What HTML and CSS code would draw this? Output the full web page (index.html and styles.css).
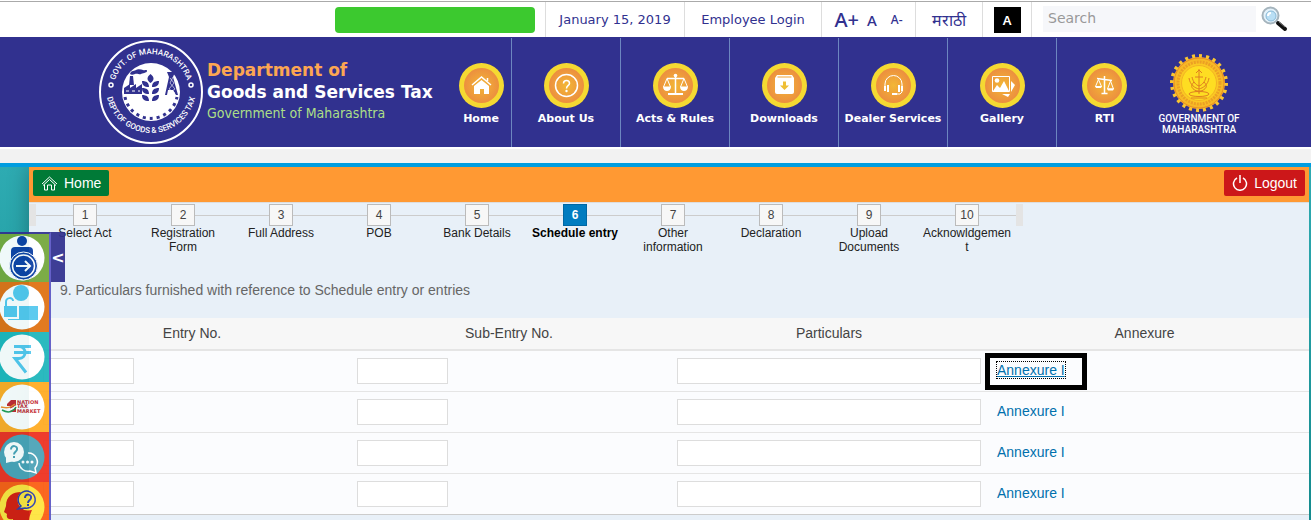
FILE: index.html
```html
<!DOCTYPE html>
<html lang="en">
<head>
    <meta charset="UTF-8">
    <meta name="viewport" content="width=device-width, initial-scale=1.0">
    <title>Department of Goods and Services Tax</title>
    <link rel="stylesheet" href="styles.css">
</head>
<body>
    <!-- shared gradients and icon parts -->
    <svg class="defs" width="0" height="0" aria-hidden="true">
        <defs>
            <radialGradient id="coin">
                <stop offset="0" stop-color="#f3b735"/>
                <stop offset="1" stop-color="#ec8f3f"/>
            </radialGradient>
            <radialGradient id="gold">
                <stop offset="0" stop-color="#ffe628"/>
                <stop offset="0.6" stop-color="#fdd522"/>
                <stop offset="1" stop-color="#f6b326"/>
            </radialGradient>
            <g id="disc">
                <circle cx="22.5" cy="22.5" r="22.5" fill="#f5d932"/>
                <circle cx="22.5" cy="22.5" r="17.5" fill="url(#coin)"/>
            </g>
        </defs>
    </svg>

    <div class="topbar">
        <div class="user-box"></div>
        <div class="top-cell date">January 15, 2019</div>
        <div class="top-cell login"><a href="#">Employee Login</a></div>
        <div class="top-cell font-size">
            <button class="size-large">A+</button>
            <button class="size-normal">A</button>
            <button class="size-small">A-</button>
        </div>
        <div class="top-cell lang"><a href="#" lang="mr">मराठी</a></div>
        <div class="top-cell contrast"><button class="contrast-button">A</button></div>
        <form class="top-cell search">
            <input type="search" placeholder="Search" aria-label="Search">
            <button type="button" class="search-button" aria-label="Search">
                <svg width="28" height="26" viewBox="0 0 28 26">
                    <path d="M16 15l3 3" stroke="#aaa" stroke-width="2"/>
                    <path d="M18 17l7 6" stroke="#111" stroke-width="4" stroke-linecap="round"/>
                    <path d="M19 16l6 5" stroke="#777" stroke-width="1"/>
                    <circle cx="10.5" cy="9.5" r="8" fill="#e3f2fb" stroke="#a5b4bd" stroke-width="2"/>
                    <circle cx="11" cy="10" r="5" fill="#b9dff5" stroke="#8ab9d6"/>
                    <path d="M8 10a3 3 0 0 1 3-3" stroke="#fff" stroke-width="2" fill="none"/>
                </svg>
            </button>
        </form>
    </div>

    <header class="header">
        <div class="brand">
            <svg class="seal" width="104" height="104" viewBox="0 0 104 104">
                <defs>
                    <path id="arc-top" d="M14 52A38 38 0 0 1 90 52"/>
                    <path id="arc-bottom" d="M7 48A45 45 0 0 0 97 48"/>
                </defs>
                <circle cx="52" cy="52" r="51" fill="none" stroke="#fff" stroke-width="2"/>
                <text class="seal-text" text-anchor="middle"><textPath href="#arc-top" startOffset="50%">GOVT. OF MAHARASHTRA</textPath></text>
                <text class="seal-text" text-anchor="middle"><textPath href="#arc-bottom" startOffset="50%">DEPT.OF GOODS &amp; SERVICES TAX</textPath></text>
                <circle cx="12" cy="45" r="2" fill="none" stroke="#fff" stroke-width="1.5"/>
                <circle cx="92" cy="45" r="2" fill="none" stroke="#fff" stroke-width="1.5"/>
                <circle cx="52" cy="52" r="29" fill="#fff"/>
                <path d="M26 57A26.500 26.500 0 0 0 78 57" fill="none" stroke="#31318f" stroke-width="3" stroke-dasharray="3 4"/>
                <g fill="#31318f">
                    <path d="M25 54v-6l6-4v4l6-4v4l6-4v10z"/>
                    <path d="M30 45l1-9h3l1 9z"/>
                    <path d="M31 34c1-4 5-3 6-4s5-1 7 0 4-1 4 1-5 2-6 3-4-1-6 0-4 1-5 0z"/>
                    <path d="M66 55l4-18-2-5h8l-2 5 5 18h-2l-3-5h-5l-1 5z"/>
                    <path d="M51.500 34c4 3 4 6 0 9-4-3-4-6 0-9z"/>
                    <path d="M50 47c-5 0-7-2-7-6 5 0 7 2 7 6zM53 47c5 0 7-2 7-6-5 0-7 2-7 6zM50 54c-5 0-7-2-7-6 5 0 7 2 7 6zM53 54c5 0 7-2 7-6-5 0-7 2-7 6zM50 61c-5 0-7-2-7-6 5 0 7 2 7 6zM53 61c5 0 7-2 7-6-5 0-7 2-7 6z"/>
                </g>
                <path d="M27 51h3M33 51h3M39 51h2" stroke="#fff" fill="none"/>
                <path d="M71 38l4 5-5 6 6 4M74 37l-3 6 5 6-6 4" stroke="#fff" stroke-width="0.6" fill="none"/>
            </svg>
            <div class="brand-text">
                <div class="brand-top">Department of</div>
                <div class="brand-name">Goods and Services Tax</div>
                <div class="brand-gov">Government of Maharashtra</div>
            </div>
        </div>

        <nav class="nav">
            <a href="#" class="nav-item nav-home">
                <svg width="45" height="45" viewBox="0 0 45 45">
                    <use href="#disc"/>
                    <path d="M13 22l9.500-8 9.500 8M28.500 18v-3" stroke="#fff" stroke-width="1.500" fill="none"/>
                    <path d="M15 23l7.500-6 7.500 6v8h-5v-5h-4v5h-6z" fill="#fff"/>
                </svg>
                <span>Home</span>
            </a>
            <a href="#" class="nav-item">
                <svg width="45" height="45" viewBox="0 0 45 45">
                    <use href="#disc"/>
                    <circle cx="22.5" cy="22.5" r="11" fill="none" stroke="#fff" stroke-width="1.5"/>
                    <path d="M19.500 20.500c0-4 6-4 6 0 0 2-3 2-3 5" fill="none" stroke="#fff" stroke-width="1.500"/>
                    <circle cx="22.5" cy="28" r="1.2" fill="#fff"/>
                </svg>
                <span>About Us</span>
            </a>
            <a href="#" class="nav-item">
                <svg width="45" height="45" viewBox="0 0 45 45">
                    <use href="#disc"/>
                    <path d="M22.500 12v18M14 15.500h17" stroke="#fff" stroke-width="1.500"/>
                    <circle cx="22.5" cy="12.5" r="1.8" fill="#fff"/>
                    <path d="M15 31h15" stroke="#fff" stroke-width="2"/>
                    <path d="M10.500 24L14 15.500 17.500 24M27.500 24L31 15.500 34.500 24" fill="none" stroke="#fff"/>
                    <path d="M10 23.500h8c0 6-8 6-8 0zM27 23.500h8c0 6-8 6-8 0z" fill="#fff"/>
                </svg>
                <span>Acts &amp; Rules</span>
            </a>
            <a href="#" class="nav-item">
                <svg width="45" height="45" viewBox="0 0 45 45">
                    <use href="#disc"/>
                    <path d="M13 15l2-3h15l2 3v14a2 2 0 0 1-2 2H15a2 2 0 0 1-2-2z" fill="#fff"/>
                    <path d="M15.500 14h14" stroke="#f0a63a"/>
                    <path d="M21 18.500h3v4h3l-4.500 4.500-4.500-4.500h3z" fill="#efbf35"/>
                </svg>
                <span>Downloads</span>
            </a>
            <a href="#" class="nav-item">
                <svg width="45" height="45" viewBox="0 0 45 45">
                    <use href="#disc"/>
                    <path d="M14 24v-3a8.500 8.500 0 0 1 17 0v8l-2 2h-4" fill="none" stroke="#fff"/>
                    <path d="M13 23h2v5h-2zM16 22h2v7h-2zM27 22h2v7h-2zM30 23h2v5h-2zM21 30h5v2h-5z" fill="#fff"/>
                </svg>
                <span>Dealer Services</span>
            </a>
            <a href="#" class="nav-item">
                <svg width="45" height="45" viewBox="0 0 45 45">
                    <use href="#disc"/>
                    <path d="M31 18l4 4-4 7zM22 31h8l-2 3z" fill="#fff"/>
                    <path d="M12.500 13.500h17v15h-17z" fill="none" stroke="#fff"/>
                    <circle cx="17" cy="17.5" r="2.3" fill="#fff"/>
                    <path d="M13 28l4-6 3 3 4-7 5 10z" fill="#fff"/>
                </svg>
                <span>Gallery</span>
            </a>
            <a href="#" class="nav-item nav-last">
                <svg width="45" height="45" viewBox="0 0 45 45">
                    <use href="#disc"/>
                    <path d="M22.500 13v17M15 15.500l15 2M19.500 30.500h6" stroke="#fff" stroke-width="1.500"/>
                    <path d="M13.500 23.500l3-7 3 7zM25.500 26l3-8 3 8z" fill="none" stroke="#fff"/>
                    <path d="M13 23h7l-1 2h-5zM25 25.500h7l-1 2h-5z" fill="#fff"/>
                </svg>
                <span>RTI</span>
            </a>
        </nav>

        <div class="emblem">
            <svg width="60" height="60" viewBox="0 0 60 60">
                <circle cx="30" cy="30" r="26" fill="#f6a72a"/>
                <circle cx="30" cy="30" r="26.5" fill="none" stroke="#f9c531" stroke-width="5" stroke-dasharray="3 4" pathLength="168"/>
                <circle cx="30" cy="30" r="25" fill="url(#gold)" stroke="#e88f25"/>
                <circle cx="30" cy="30" r="21" fill="none" stroke="#eca024" stroke-width="3" stroke-dasharray="2 1"/>
                <circle cx="30" cy="30" r="17.5" fill="#fedd22" stroke="#f3b124"/>
                <g fill="none" stroke="#de7f20">
                    <path d="M30 16v25M27 20l3-3 3 3M26 24h8M20 25c1 7 6 10 10 11 4-1 9-4 10-11M23 24c1 5 4 8 7 9 3-1 6-4 7-9M25 29c-4 4-3 7 5 10 8-3 9-6 5-10"/>
                    <ellipse cx="30" cy="41" rx="10" ry="2.5"/>
                    <path d="M22 45h16M26 38h8"/>
                </g>
            </svg>
            <div>GOVERNMENT OF<br>MAHARASHTRA</div>
        </div>
    </header>

    <div class="strip"></div>

    <main class="main">
        <div class="panel">
            <div class="action-bar">
                <a href="#" class="button home-button">
                    <svg width="17" height="15" viewBox="0 0 17 15" fill="none" stroke="#fff">
                        <path d="M1 8l7.500-7L16 8M2 9.500l6.500-6 6.500 6M3.500 8.500v5.500h3v-5h4v5h3V8.500"/>
                    </svg>
                    Home
                </a>
                <button class="button logout-button">
                    <svg width="16" height="16" viewBox="0 0 16 16" fill="none" stroke="#fff" stroke-width="1.5">
                        <path d="M5 3a6.500 6.500 0 1 0 6 0M8 0v8"/>
                    </svg>
                    Logout
                </button>
            </div>

            <ol class="steps">
                <li><span class="number">1</span>Select Act</li>
                <li><span class="number">2</span>Registration Form</li>
                <li><span class="number">3</span>Full Address</li>
                <li><span class="number">4</span>POB</li>
                <li><span class="number">5</span>Bank Details</li>
                <li class="active"><span class="number">6</span>Schedule entry</li>
                <li><span class="number">7</span>Other information</li>
                <li><span class="number">8</span>Declaration</li>
                <li><span class="number">9</span>Upload Documents</li>
                <li><span class="number">10</span>Acknowldgement</li>
            </ol>

            <h1 class="title">9. Particulars furnished with reference to Schedule entry or entries</h1>

            <table class="entries">
                <thead>
                    <tr>
                        <th>Entry No.</th>
                        <th>Sub-Entry No.</th>
                        <th>Particulars</th>
                        <th>Annexure</th>
                    </tr>
                </thead>
                <tbody>
                    <tr>
                        <td><input type="text" class="short" aria-label="Entry No. 1"></td>
                        <td><input type="text" class="short" aria-label="Sub-Entry No. 1"></td>
                        <td><input type="text" aria-label="Particulars 1"></td>
                        <td><a href="#" class="marked">Annexure I</a></td>
                    </tr>
                    <tr>
                        <td><input type="text" class="short" aria-label="Entry No. 2"></td>
                        <td><input type="text" class="short" aria-label="Sub-Entry No. 2"></td>
                        <td><input type="text" aria-label="Particulars 2"></td>
                        <td><a href="#">Annexure I</a></td>
                    </tr>
                    <tr>
                        <td><input type="text" class="short" aria-label="Entry No. 3"></td>
                        <td><input type="text" class="short" aria-label="Sub-Entry No. 3"></td>
                        <td><input type="text" aria-label="Particulars 3"></td>
                        <td><a href="#">Annexure I</a></td>
                    </tr>
                    <tr>
                        <td><input type="text" class="short" aria-label="Entry No. 4"></td>
                        <td><input type="text" class="short" aria-label="Sub-Entry No. 4"></td>
                        <td><input type="text" aria-label="Particulars 4"></td>
                        <td><a href="#">Annexure I</a></td>
                    </tr>
                </tbody>
            </table>
        </div>
    </main>

    <!-- quick links over the left edge -->
    <aside class="dock">
        <div class="dock-links">
            <a href="#" class="dock-item green" aria-label="Login">
                <svg width="46" height="46" viewBox="0 0 46 46">
                    <circle cx="23" cy="23" r="22.5" fill="#fff"/>
                    <g fill="#0a3ea3">
                        <circle cx="23" cy="6" r="5"/>
                        <path d="M12 30V16q0-4 4-4h14q4 0 4 4v14z"/>
                    </g>
                    <circle cx="24.500" cy="31" r="14" fill="#0a3ea3" stroke="#fff"/>
                    <circle cx="24.500" cy="31" r="11" fill="none" stroke="#fff" stroke-width="1.5"/>
                    <path d="M17 31h13M26 26l5 5-5 5" fill="none" stroke="#fff" stroke-width="2"/>
                </svg>
            </a>
            <a href="#" class="dock-item orange" aria-label="Unlock profile">
                <svg width="46" height="46" viewBox="0 0 46 46">
                    <circle cx="23" cy="23" r="22.5" fill="#fff"/>
                    <g fill="#52c8ee">
                        <circle cx="22" cy="9" r="8"/>
                        <path d="M20 22h19v14H9v-1h11z"/>
                        <path d="M5 22h13v11H5z"/>
                    </g>
                    <path d="M7 22v-4c0-5 7-5 7-1" fill="none" stroke="#52c8ee" stroke-width="2"/>
                    <path d="M19 21v13H5" fill="none" stroke="#fff"/>
                </svg>
            </a>
            <a href="#" class="dock-item teal" aria-label="Payments">
                <svg width="46" height="46" viewBox="0 0 46 46">
                    <circle cx="23" cy="23" r="22.5" fill="#fff"/>
                    <path d="M15 12.500h17M15 18.500h17M15 12.500h5c8 0 8 12 0 12h-4l11 14" fill="none" stroke="#52c8ee" stroke-width="3"/>
                </svg>
            </a>
            <a href="#" class="dock-item amber" aria-label="Nation Tax Market">
                <svg width="46" height="46" viewBox="0 0 46 46">
                    <circle cx="23" cy="23" r="22.5" fill="#fff"/>
                    <path d="M8 20l4-4h5v12h-6v-6H8z" fill="#c2262e"/>
                    <path d="M2 23c7 2 10 0 14-3" fill="none" stroke="#f28c28" stroke-width="1.5"/>
                    <path d="M3 25c7 3 11 0 14-3" fill="none" stroke="#fff" stroke-width="2"/>
                    <path d="M3 26c7 4 12 1 14-3" fill="none" stroke="#1f9a50" stroke-width="1.5"/>
                    <text class="market-text" x="18" y="20">NATION</text>
                    <text class="market-text" x="18" y="24">TAX</text>
                    <text class="market-text" x="18" y="29">MARKET</text>
                </svg>
            </a>
            <a href="#" class="dock-item red" aria-label="Chat">
                <svg width="46" height="46" viewBox="0 0 46 46">
                    <circle cx="23" cy="23" r="22.5" fill="#4aa2b6"/>
                    <circle cx="15" cy="18" r="10" fill="#fff"/>
                    <path d="M7 23v6l8-2z" fill="#fff"/>
                    <path d="M12 15.500c0-5 7-4 6 0 0 2-3 2-3 5M15 22v2" fill="none" stroke="#4aa2b6" stroke-width="2"/>
                    <path d="M29 19a9 9 0 0 1 7 15l1 5-6-2a9 9 0 0 1-11-8" fill="none" stroke="#fff" stroke-width="1.500"/>
                    <g fill="#fff">
                        <circle cx="24" cy="28" r="1.5"/>
                        <circle cx="28.5" cy="28" r="1.5"/>
                        <circle cx="33" cy="28" r="1.5"/>
                    </g>
                </svg>
            </a>
            <a href="#" class="dock-item flame" aria-label="Help">
                <svg width="46" height="46" viewBox="0 0 46 46">
                    <circle cx="23" cy="23" r="22.5" fill="#ffe53b"/>
                    <path d="M7 22c0-10 7-14 15-14 9 0 13 6 12 14-1 6-4 8-4 18H14v-5c-5 1-7-1-6-5l-3-2z" fill="#d8190b"/>
                    <circle cx="29" cy="16" r="10.5" fill="#ffe53b"/>
                    <path d="M22 22l-3 3 7-1a8.500 8.500 0 1 0-4-2z" fill="#ffe53b" stroke="#2a3bb0" stroke-width="1.500"/>
                    <path d="M26 14c0-5 7-4 6 0 0 2-3 2-3 5M29 20v2" fill="none" stroke="#2a3bb0" stroke-width="2"/>
                </svg>
            </a>
        </div>
        <button class="dock-toggle">&lt;</button>
    </aside>
</body>
</html>
```
FILE: styles.css
```css
* {
    margin: 0;
    padding: 0;
    box-sizing: border-box;
}

body {
    display: flex;
    flex-direction: column;
    min-height: 100vh;
    background: #fff;
    color: #444;
    font-family: "Liberation Sans", Arial, sans-serif;
    font-size: 14px;
}

a {
    text-decoration: none;
}

button {
    border: none;
    background: none;
    cursor: pointer;
}

svg {
    display: block;
    flex: none;
}

.defs {
    position: absolute;
}

/* top bar */
.topbar {
    display: flex;
    justify-content: flex-end;
    height: 36px;
    margin-top: 1px;
    border-top: 1px solid #aaa;
    font-family: Verdana, "DejaVu Sans", sans-serif;
    font-size: 13px;
    color: #31318f;
}

.user-box {
    width: 200px;
    height: 26px;
    margin: 5px 10px 0 0;
    border-radius: 4px;
    background: #3cc92f;
}

.top-cell {
    display: flex;
    align-items: center;
    justify-content: center;
    border-left: 1px solid #ddd;
}

.top-cell a {
    color: #31318f;
}

.date {
    width: 139px;
}

.login {
    width: 137px;
}

.font-size {
    width: 94px;
    gap: 8px;
}

.font-size button {
    font-family: "Noto Sans", sans-serif;
    font-weight: 500;
    color: #31318f;
}

.font-size .size-large {
    font-size: 20px;
}

.font-size .size-normal {
    font-size: 15px;
}

.font-size .size-small {
    margin-left: 6px;
    font-size: 12px;
}

.lang {
    width: 67px;
    font-size: 16px;
    font-weight: 500;
}

.contrast {
    width: 49px;
}

.contrast-button {
    width: 27px;
    height: 26px;
    background: #000;
    color: #fff;
    font-family: "Noto Sans", sans-serif;
    font-size: 13px;
    font-weight: 600;
}

.search {
    width: 280px;
    justify-content: flex-start;
    padding: 0 0 2px 11px;
}

.search input {
    width: 213px;
    height: 26px;
    border: none;
    background: #f6f7fa;
    padding: 0 0 2px 5px;
    font-family: Verdana, "DejaVu Sans", sans-serif;
    font-size: 14px;
}

.search input::placeholder {
    color: #999;
}

.search-button {
    margin-left: 4px;
}

/* header */
.header {
    display: flex;
    height: 110px;
    padding-right: 65px;
    background: #31318f;
    font-family: Verdana, "DejaVu Sans", sans-serif;
}

.brand {
    display: flex;
    flex: 1;
    align-items: flex-start;
    gap: 4px;
    padding: 3px 0 0 99px;
    white-space: nowrap;
}

.seal-text {
    font-family: Roboto, sans-serif;
    font-size: 8px;
    font-weight: 500;
    fill: #fff;
}

.brand-text {
    padding-top: 19px;
    font-size: 17px;
    font-weight: bold;
    line-height: 22px;
    color: #fff;
}

.brand-top {
    color: #fca652;
}

.brand-gov {
    font-family: Tahoma, "DejaVu Sans Condensed", sans-serif;
    font-size: 14px;
    font-weight: normal;
    line-height: 20px;
    color: #acdf87;
}

.nav {
    display: flex;
    padding-top: 1px;
}

.nav-item {
    display: flex;
    flex-direction: column;
    align-items: center;
    gap: 4px;
    width: 109px;
    padding-top: 25px;
    border-right: 1px solid #6d86c0;
    color: #fff;
    font-size: 11px;
    font-weight: bold;
    line-height: 14px;
    white-space: nowrap;
}

.nav-home {
    width: 61px;
}

.nav-last {
    width: 95px;
    border-right: none;
}

.emblem {
    display: flex;
    flex-direction: column;
    align-items: center;
    width: 94px;
    padding-top: 16px;
    color: #fff;
    font-family: Roboto, sans-serif;
    font-size: 10px;
    font-weight: 500;
    line-height: 11px;
    text-align: center;
    white-space: nowrap;
}

.strip {
    height: 20px;
    border-top: 2px solid #fff;
    border-bottom: 4px solid #009de0;
    background: #f2f2f2;
}

/* main panel */
.main {
    display: flex;
    flex: 1;
    padding: 0 2px 0 29px;
    background: linear-gradient(#2eabb2, #148b8e);
}

.panel {
    flex: 1;
    min-width: 0;
    background: #e8f0f8;
    box-shadow: 0 0 20px rgba(0, 0, 0, 0.3);
    clip-path: inset(0 0 0 -29px);
}

.action-bar {
    display: flex;
    justify-content: space-between;
    align-items: flex-start;
    height: 36px;
    padding: 3px 4px 0;
    border-bottom: 1px solid #ddd;
    background: #ff9933;
}

.button {
    display: flex;
    align-items: center;
    gap: 6px;
    height: 26px;
    padding: 0 8px;
    border-radius: 2px;
    color: #fff;
    font-family: inherit;
    font-size: 14px;
}

.home-button {
    background: #007a37;
}

.logout-button {
    background: #cc1719;
}

.steps {
    display: flex;
    width: 994px;
    margin-top: 1px;
    border: solid #e4e4e4;
    border-width: 0 7px;
    border-image: linear-gradient(#e4e4e4 22px, transparent 22px) 1;
    background: linear-gradient(#ccc, #ccc) 0 11px / 100% 1px no-repeat;
    list-style: none;
}

.steps li {
    flex: 1;
    min-width: 0;
    padding: 0 4px;
    color: #222;
    font-size: 12px;
    line-height: 14px;
    text-align: center;
    overflow-wrap: break-word;
}

.number {
    display: block;
    width: 24px;
    height: 22px;
    margin: 0 auto;
    border: 1px solid #bbb;
    background: #f7f7f7;
    color: #444;
    line-height: 20px;
}

.steps .active {
    color: #000;
    font-weight: bold;
}

.active .number {
    border-color: #0067a3;
    background: #007cc0;
    color: #fff;
}

.title {
    padding: 28px 31px 20px;
    color: #666;
    font-size: 14px;
    font-weight: normal;
    line-height: 16px;
}

/* entries table */
.entries {
    width: 100%;
    table-layout: fixed;
    border-collapse: separate;
    border-spacing: 0;
    border-bottom: 1px solid #ccc;
    background: #fbfcfe;
}

.entries th {
    height: 33px;
    padding: 0 8px 2px;
    border-bottom: 2px solid #e5e5e5;
    background: #f7f7f7;
    font-weight: normal;
}

.entries td {
    height: 41px;
    padding: 0 8px;
    border-bottom: 1px solid #e5e5e5;
}

.entries tr:last-child td {
    height: 40px;
    border-bottom: none;
}

.entries tr > :first-child {
    padding-left: 14px;
}

.entries tr > :last-child {
    padding-right: 17px;
    padding-bottom: 2px;
}

.entries input {
    display: block;
    width: 100%;
    height: 26px;
    border: 1px solid #ddd;
    background: #fff;
}

.entries .short {
    width: 91px;
}

.entries a {
    color: #0070ad;
}

.entries .marked {
    position: relative;
    outline: 1px dotted #000;
    text-decoration: underline;
}

.marked::before {
    content: "";
    position: absolute;
    inset: -9px -22px -12px -12px;
    border: 5px solid #000;
}

/* dock */
.dock {
    position: fixed;
    top: 232px;
    bottom: 0;
    left: 0;
    display: flex;
    align-items: flex-start;
    overflow: hidden;
    opacity: 0.93;
}

.dock-links {
    width: 51px;
    border-top: 2px solid #31318f;
    border-right: 2px solid #5b57c4;
}

.dock-item {
    display: flex;
    align-items: center;
    height: 50px;
}

.dock-item svg {
    margin-left: -1px;
}

.green {
    height: 48px;
    background: #74a73a;
}

.orange {
    background: #e07010;
}

.teal {
    background: #1bb5bb;
}

.amber {
    background: #ffab20;
}

.red {
    background: #ee2f1e;
}

.flame {
    background: #fb5c10;
}

.market-text {
    font-family: "DejaVu Sans", sans-serif;
    font-size: 5px;
    font-weight: bold;
    fill: #c2262e;
}

.dock-toggle {
    width: 14px;
    height: 50px;
    background: #31318f;
    color: #fff;
    font-family: "DejaVu Sans", sans-serif;
    font-size: 16px;
    font-weight: bold;
}
```
